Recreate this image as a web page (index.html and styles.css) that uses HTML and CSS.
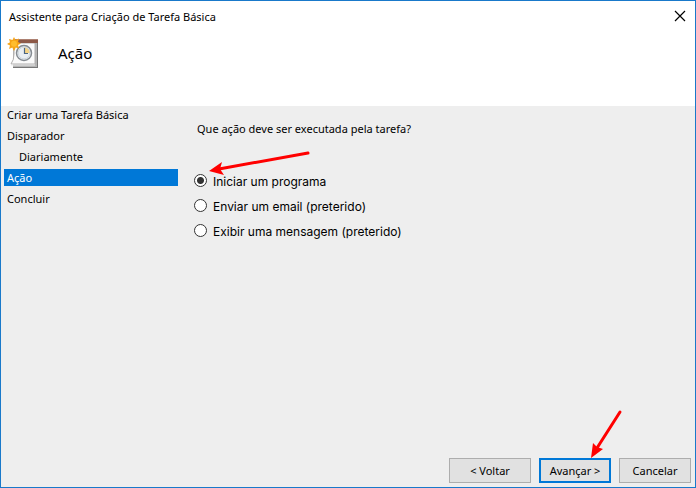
FILE: index.html
```html
<!DOCTYPE html>
<html lang="pt-BR">

<head>
    <meta charset="UTF-8">
    <meta name="viewport" content="width=device-width, initial-scale=1.0">
    <title>Assistente para Criação de Tarefa Básica</title>
    <link rel="stylesheet" href="styles.css">
</head>

<body>
    <form class="wizard">
        <header class="header">
            <div class="titlebar">
                <span class="title">Assistente para Criação de Tarefa Básica</span>
                <button type="button" class="close" aria-label="Fechar">
                    <svg width="12" height="12" viewBox="0 0 12 12">
                        <path d="M1 1L11 11M11 1L1 11" stroke="#000" stroke-width="1.2" />
                    </svg>
                </button>
            </div>
            <div class="heading">
                <svg class="task-icon" width="32" height="32" viewBox="0 0 32 32">
                    <path d="M6 30H30V3H31V31H6Z" fill="#777" />
                    <path d="M6 3H30V30H6Z" fill="#b5b5b5" />
                    <path d="M7 6H28V27H4Q7 23 7 17Z" fill="#fbfbfb" stroke="#b0aeae" stroke-width="1" />
                    <path d="M4 28H28" stroke="#ececec" stroke-width="1" />
                    <path d="M8 2H31V6H8Z" fill="#8d5948" />
                    <path d="M8 2.500H31" stroke="#ad8172" stroke-width="1" />
                    <circle cx="17" cy="16" r="7.500" fill="#e9eef3" stroke="#858b91" stroke-width="1.500" />
                    <path d="M17 16V10A6 6 0 0 1 23 16Z" fill="#f5d384" />
                    <circle cx="17" cy="16" r="5.800" fill="none" stroke="#c5ced6" stroke-width="0.700" />
                    <path d="M17.500 11V16.500H21" fill="none" stroke="#4b6682" stroke-width="1.200" />
                    <path d="M7 0L8.500 3L12 1.500L11 5L14 6.500L11 8L12 11.500L8.800 10.500L7 14L5.300 10.500L2 12L3 8.500L0 7L3 5.300L2 2L5.500 3Z"
                        fill="#f7a416" />
                    <circle cx="7" cy="6.800" r="3" fill="#ffbd2e" />
                </svg>
                <h1>Ação</h1>
            </div>
        </header>

        <div class="content">
            <ol class="steps">
                <li>Criar uma Tarefa Básica</li>
                <li>Disparador</li>
                <li class="substep">Diariamente</li>
                <li class="current" aria-current="step">Ação</li>
                <li>Concluir</li>
            </ol>

            <fieldset class="actions">
                <legend>Que ação deve ser executada pela tarefa?</legend>
                <div class="option">
                    <input type="radio" name="action" id="start" checked>
                    <label for="start">Iniciar um programa</label>
                    <svg class="arrow arrow-option" width="104" height="26" viewBox="0 0 104 26">
                        <path d="M101 4L12 20" stroke="#f00" stroke-width="3" stroke-linecap="round" />
                        <path d="M2 22L15 13L13 20L17 26Z" fill="#f00" />
                    </svg>
                </div>
                <div class="option">
                    <input type="radio" name="action" id="email">
                    <label for="email">Enviar um email (preterido)</label>
                </div>
                <div class="option">
                    <input type="radio" name="action" id="message">
                    <label for="message">Exibir uma mensagem (preterido)</label>
                </div>
            </fieldset>
        </div>

        <footer class="buttons">
            <button type="button" class="btn back">&lt; Voltar</button>
            <div class="next-wrap">
                <button type="submit" class="btn next">Avançar &gt;</button>
                <svg class="arrow arrow-next" width="34" height="50" viewBox="0 0 34 50">
                    <path d="M31 3L8 39" stroke="#f00" stroke-width="3" stroke-linecap="round" />
                    <path d="M2 49L4 34L8 38L14 40Z" fill="#f00" />
                </svg>
            </div>
            <button type="button" class="btn">Cancelar</button>
        </footer>
    </form>
</body>

</html>
```

FILE: styles.css
```css
* {
    box-sizing: border-box;
}

body {
    margin: 0;
    font-family: "Noto Sans", "Open Sans", sans-serif;
    font-size: 11px;
    line-height: 17px;
    color: #000;
}

.wizard {
    display: flex;
    flex-direction: column;
    min-height: 100vh;
    border: 1px solid #1979ca;
    background-color: #eee;
}

.header {
    background-color: #fff;
    padding-bottom: 37px;
}

.titlebar {
    display: flex;
    align-items: center;
    justify-content: space-between;
    height: 30px;
    padding: 0 8px;
}

.close {
    display: flex;
    padding: 1px;
    border: none;
    background: none;
}

.heading {
    display: flex;
    align-items: center;
    gap: 19px;
    padding: 6px 6px 0;
}

.heading h1 {
    margin: 0;
    font-size: 15px;
    font-weight: normal;
    line-height: 24px;
}

.content {
    display: flex;
    flex: 1;
    gap: 16px;
    padding-left: 3px;
}

.steps {
    display: flex;
    flex-direction: column;
    gap: 4px;
    flex: 0 0 174px;
    margin: 0;
    padding: 0;
    list-style: none;
}

.steps li {
    padding-left: 3px;
}

.steps .substep {
    padding-left: 15px;
}

.steps .current {
    background-color: #0078d7;
    color: #fff;
}

.actions {
    flex: 1;
    min-width: 0;
    margin: 0;
    padding: 0;
    border: none;
}

.actions legend {
    padding: 14px 3px 31px;
}

.option {
    position: relative;
    display: flex;
    align-items: center;
    gap: 6px;
    height: 25px;
    font-family: Inter, "Liberation Sans", Arial, sans-serif;
    font-size: 12px;
}

.option label {
    padding-top: 2px;
}

.option input {
    appearance: none;
    width: 13px;
    height: 13px;
    margin: 0;
    border: 1px solid #333;
    border-radius: 50%;
    background-color: #fff;
}

.option input:checked {
    background-image: radial-gradient(circle, #333 3px, #fff 4px);
}

/* Red arrows lie over the controls they point at */
.arrow {
    position: absolute;
    pointer-events: none;
}

.arrow-option {
    top: -19px;
    left: 13px;
}

.buttons {
    display: flex;
    justify-content: flex-end;
    gap: 8px;
    padding: 4px;
}

.btn {
    width: 72px;
    height: 25px;
    padding: 0;
    border: 1px solid #adadad;
    background-color: #e1e1e1;
    color: #000;
    font: inherit;
}

.back {
    width: 82px;
}

.next {
    border: 2px solid #0078d7;
}

.next-wrap {
    position: relative;
}

.arrow-next {
    top: -49px;
    left: 50px;
}
```
